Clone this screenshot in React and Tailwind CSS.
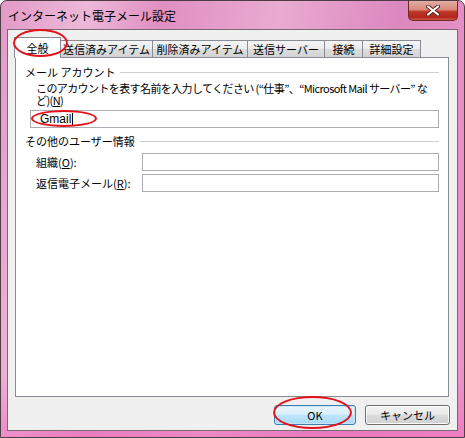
// Vista-style "Internet E-mail Settings" dialog
import React from 'react';

const FONT = "font-['Noto_Sans_CJK_JP','Noto_Sans',sans-serif]";

const tabs = [
  { label: '送信済みアイテム', w: 'w-[93px]' },
  { label: '削除済みアイテム', w: 'w-[96px]' },
  { label: '送信サーバー', w: 'w-[78px]' },
  { label: '接続', w: 'w-[39px]' },
  { label: '詳細設定', w: 'w-[59px]' },
];

const GroupLabel = ({ children }) => (
  <div className="h-[11px] flex items-center gap-[5px] pr-[9px]">
    <span className="text-[11px] leading-[11px] text-black whitespace-nowrap">{children}</span>
    <div className="flex-1 border-t border-[#d0d0d0]" />
  </div>
);

const TextBox = ({ className = '', children }) => (
  <div
    className={`h-[18px] shrink-0 bg-white border border-[#abadb3] flex items-center pl-[9px] text-[12px] leading-none text-black ${className}`}
  >
    {children}
  </div>
);

const Ellipse = ({ className }) => (
  <div className={`absolute z-20 rounded-[50%] border-2 border-[#e3121b] pointer-events-none ${className}`} />
);

const CloseButton = () => (
  <div className="absolute right-[6px] top-0 w-[50px] h-[20px] rounded-b-[5px] border border-t-0 border-[#6b2a26] bg-[linear-gradient(180deg,#e3ada3_0%,#d98a7c_45%,#c23a2c_55%,#b5241a_85%,#d0584a_100%)] flex items-center justify-center">
    <svg width="14" height="11" viewBox="0 0 14 11">
      <path d="M2 1.5 L12 9.5 M12 1.5 L2 9.5" stroke="#5a1f1a" strokeWidth="4" strokeLinecap="round" />
      <path d="M2 1.5 L12 9.5 M12 1.5 L2 9.5" stroke="#ffffff" strokeWidth="2.2" strokeLinecap="round" />
    </svg>
  </div>
);

const App = () => {
  return (
    <div
      className={`${FONT} relative w-[465px] h-[438px] overflow-hidden rounded-t-[7px] border border-[#4b3c46] bg-[linear-gradient(180deg,rgba(255,255,255,0)_0%,rgba(255,255,255,0)_85%,rgba(240,110,190,0.6)_100%),linear-gradient(100deg,#e29ac7_0%,#edb8d8_16%,#e08fc2_30%,#e9abd1_52%,#dc88bf_74%,#ec95cb_100%)] flex flex-col`}
    >
      {/* Title bar */}
      <div className="h-[28px] shrink-0 flex items-center pl-[7px] pt-[1px]">
        <span className="text-[12px] leading-none text-black">インターネット電子メール設定</span>
      </div>
      <CloseButton />

      {/* Client area */}
      <div className="mx-[6px] mb-[6px] flex-1 border border-[#7a6873] bg-[#f0f0f0] flex flex-col">
        {/* Tab strip */}
        <div className="flex items-end h-[27px] pl-[6px] pt-[7px]">
          <div className="relative z-10 -mb-px w-[47px] h-[21px] bg-white border border-b-0 border-[#898c95] flex items-center justify-center text-[11px] leading-none text-black">
            全般
          </div>
          {tabs.map((t) => (
            <div
              key={t.label}
              className={`${t.w} h-[17px] -ml-px first:ml-0 border border-b-0 border-[#898c95] bg-[linear-gradient(180deg,#f4f4f4_0%,#ebebeb_50%,#dcdcdc_51%,#d4d4d4_100%)] flex items-center justify-center text-[11px] leading-none text-black whitespace-nowrap`}
            >
              {t.label}
            </div>
          ))}
        </div>

        {/* Tab panel */}
        <div className="ml-[7px] w-[434px] h-[340px] bg-white border border-[#898c95] pl-[9px] pt-[9px] flex flex-col">
          <GroupLabel>メール アカウント</GroupLabel>
          <div className="pl-[11px] pt-[4px] text-[11px] leading-[12px] text-black tracking-[-0.6px]">
            <div className="whitespace-nowrap">
              このアカウントを表す名前を入力してください (“仕事”、“Microsoft Mail サーバー” な
            </div>
            <div className="whitespace-nowrap">
              ど)(<span className="underline">N</span>)
            </div>
          </div>
          <TextBox className="ml-[5px] mt-[4px] w-[409px] font-['Liberation_Sans',sans-serif]">
            <span>Gmail</span>
            <span className="ml-px w-px h-[13px] bg-black" />
          </TextBox>

          <div className="mt-[8px]">
            <GroupLabel>その他のユーザー情報</GroupLabel>
          </div>
          <div className="mt-[6px] flex flex-col gap-[3px]">
            <div className="flex items-center pl-[11px]">
              <span className="w-[106px] text-[11px] leading-none text-black">
                組織(<span className="underline">O</span>):
              </span>
              <TextBox className="w-[297px]" />
            </div>
            <div className="flex items-center pl-[11px]">
              <span className="w-[106px] text-[11px] leading-none text-black whitespace-nowrap">
                返信電子メール(<span className="underline">R</span>):
              </span>
              <TextBox className="w-[297px]" />
            </div>
          </div>
        </div>

        {/* Buttons */}
        <div className="flex justify-end gap-[9px] pr-[7px] pt-[8px]">
          <button className="w-[82px] h-[20px] rounded-[3px] border border-[#3c7fb1] bg-[linear-gradient(180deg,#eaf6fd_0%,#d9f0fc_45%,#bee6fd_50%,#a7d9f5_100%)] shadow-[inset_0_0_0_1px_#c6e6f8] text-[11px] leading-none text-black">
            OK
          </button>
          <button className="w-[85px] h-[20px] rounded-[3px] border border-[#707070] bg-[linear-gradient(180deg,#f2f2f2_0%,#ebebeb_45%,#dddddd_50%,#cfcfcf_100%)] shadow-[inset_0_0_0_1px_#fcfcfc] text-[11px] leading-none text-black">
            キャンセル
          </button>
        </div>
      </div>

      {/* Red annotation circles */}
      <Ellipse className="left-[12px] top-[28px] w-[55px] h-[28px]" />
      <Ellipse className="left-[30px] top-[109px] w-[66px] h-[17px]" />
      <Ellipse className="left-[272px] top-[395px] w-[79px] h-[33px]" />
    </div>
  );
};

export default App;
